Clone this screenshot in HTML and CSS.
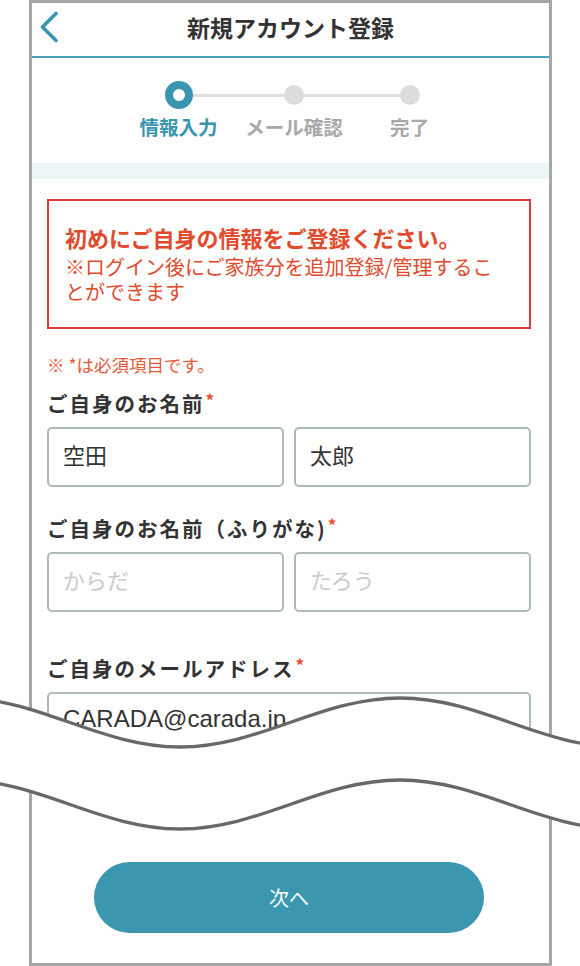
FILE: index.html
```html
<!DOCTYPE html>
<html lang="ja">
<head>
    <meta charset="UTF-8">
    <title>新規アカウント登録</title>
    <link rel="stylesheet" href="styles.css">
</head>
<body>
    <div class="phone">
        <header class="topbar">
            <a class="back" href="#" aria-label="戻る">
                <svg width="20" height="32" viewBox="0 0 20 32">
                    <path d="M17 2.5 L3.5 16 L17 29.5" fill="none" stroke="#3a96b0" stroke-width="3.6" stroke-linecap="round" stroke-linejoin="round"/>
                </svg>
            </a>
            <h1 class="title">新規アカウント登録</h1>
        </header>

        <ol class="steps">
            <li class="step current"><span class="dot"></span><span class="step-label">情報入力</span></li>
            <li class="step"><span class="dot"></span><span class="step-label">メール確認</span></li>
            <li class="step"><span class="dot"></span><span class="step-label">完了</span></li>
        </ol>
        <div class="band"></div>

        <form class="form">
            <div class="notice">
                <p class="notice-title">初めにご自身の情報をご登録ください。</p>
                <p class="notice-text">※ログイン後にご家族分を追加登録/管理することができます</p>
            </div>

            <p class="required-note">※ *は必須項目です。</p>

            <div class="field">
                <label class="field-label">ご自身のお名前<span class="req">*</span></label>
                <div class="pair">
                    <input class="input" type="text" value="空田">
                    <input class="input" type="text" value="太郎">
                </div>
            </div>

            <div class="field">
                <label class="field-label">ご自身のお名前（ふりがな)<span class="req">*</span></label>
                <div class="pair">
                    <input class="input" type="text" placeholder="からだ">
                    <input class="input" type="text" placeholder="たろう">
                </div>
            </div>

            <div class="field field-wide">
                <label class="field-label">ご自身のメールアドレス<span class="req">*</span></label>
                <input class="input input-latin" type="email" value="CARADA@carada.jp">
            </div>

            <button type="button" class="next">次へ</button>
        </form>
    </div>

    <svg class="cut" width="580" height="180" viewBox="0 0 580 180">
        <path d="M-40 18 C40 18 100 67 180 67 C260 67 320 18 400 18 C480 18 540 67 620 67 L620 149 C540 149 480 100 400 100 C320 100 260 149 180 149 C100 149 40 100 -40 100 Z" fill="#fff"/>
        <path d="M-40 18 C40 18 100 67 180 67 C260 67 320 18 400 18 C480 18 540 67 620 67" fill="none" stroke="#686868" stroke-width="3.3"/>
        <path d="M-40 100 C40 100 100 149 180 149 C260 149 320 100 400 100 C480 100 540 149 620 149" fill="none" stroke="#686868" stroke-width="3.3"/>
    </svg>
</body>
</html>
```

FILE: styles.css
```css
body {
    margin: 0;
    position: relative;
    background-color: white;
    font-family: "Noto Sans CJK JP", "Noto Sans", sans-serif;
    color: #333;
}
.phone {
    box-sizing: border-box;
    width: 523px;
    height: 966px;
    margin-left: 29px;
    border: 3px solid #a6a6a6;
    overflow: hidden;
    background-color: white;
}
.topbar {
    display: grid;
    grid-template-columns: 60px 1fr 60px;
    align-items: center;
    box-sizing: border-box;
    height: 55px;
    padding-bottom: 5px;
    border-bottom: 2px solid #4aa0b8;
}
.back {
    display: flex;
    padding-left: 7px;
}
.title {
    margin: 0;
    text-align: center;
    font-size: 23px;
    font-weight: bold;
    line-height: 30px;
    color: #333;
}
.steps {
    display: flex;
    justify-content: center;
    list-style: none;
    margin: 0;
    padding: 23px 0 22px 7px;
}
.step {
    position: relative;
    display: flex;
    flex-direction: column;
    align-items: center;
    width: 115.5px;
}
.step + .step::before {
    content: "";
    position: absolute;
    top: 13px;
    right: 50%;
    width: 100%;
    height: 3px;
    background-color: #dedede;
}
.dot {
    position: relative;
    z-index: 1;
    box-sizing: border-box;
    width: 20px;
    height: 20px;
    margin: 4px 0;
    border-radius: 50%;
    background-color: #dcdcdc;
}
.current .dot {
    width: 28px;
    height: 28px;
    margin: 0;
    border: 8px solid #3a96b0;
    background-color: white;
}
.step-label {
    margin-top: 4px;
    font-size: 19.5px;
    font-weight: bold;
    line-height: 28px;
    color: #a8a8a8;
    white-space: nowrap;
}
.current .step-label {
    color: #3a96b0;
}
.band {
    height: 16px;
    background-color: #edf6f7;
}
.form {
    padding: 20px 18px 0 15px;
}
.notice {
    border: 2px solid #e4383e;
    padding: 21px 30px 23px 16px;
    color: #e04b2d;
}
.notice p {
    margin: 0;
}
.notice-title {
    font-size: 22px;
    font-weight: bold;
    line-height: 30px;
}
.notice-text {
    margin-top: 2px !important;
    font-size: 20px;
    line-height: 25px;
}
.required-note {
    margin: 26px 0 0;
    height: 20px;
    font-size: 17.5px;
    line-height: 20px;
    color: #e8573a;
}
.field {
    margin-top: 26px;
}
.required-note + .field {
    margin-top: 13px;
}
.field-wide {
    margin-top: 41px;
}
.field-label {
    display: block;
    height: 30px;
    margin-bottom: 9px;
    font-size: 20.5px;
    font-weight: bold;
    line-height: 30px;
    letter-spacing: 2px;
    color: #333;
}
.req {
    margin-left: 1px;
    font-size: 17px;
    line-height: 0;
    vertical-align: 5px;
    color: #e5502e;
    letter-spacing: 0;
}
.pair {
    display: grid;
    grid-template-columns: 1fr 1fr;
    gap: 10px;
}
.input {
    display: block;
    box-sizing: border-box;
    width: 100%;
    height: 60px;
    padding: 0 14px 6px;
    border: 2px solid #adb9bc;
    border-radius: 5px;
    font-family: "Noto Sans CJK JP", sans-serif;
    font-size: 22px;
    color: #333;
    background-color: white;
}
.input::placeholder {
    color: #cbcbcb;
}
.input-latin {
    font-family: "Liberation Sans", Arial, sans-serif;
    font-size: 24px;
}
.next {
    display: block;
    width: 390px;
    height: 71px;
    margin: 110px auto 0;
    border: none;
    border-radius: 36px;
    background-color: #3b96b0;
    color: white;
    font-family: "Noto Sans CJK JP", sans-serif;
    font-size: 20px;
    cursor: pointer;
}
.cut {
    position: absolute;
    top: 680px;
    left: 0;
}
```
